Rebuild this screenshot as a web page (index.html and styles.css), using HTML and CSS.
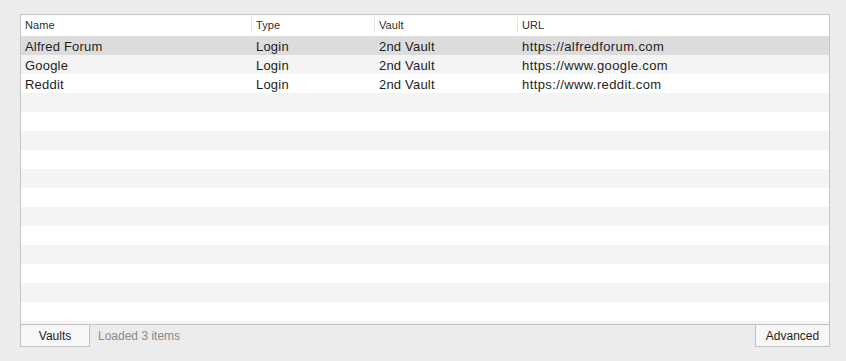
FILE: index.html
```html
<!DOCTYPE html>
<html lang="en">
	<head>
		<meta charset="UTF-8" />
		<title>Vault items</title>
		<link rel="stylesheet" href="styles.css">
	</head>
	<body>
		<div class="window">
			<div class="table">
				<div class="head row">
					<div class="cell">Name</div>
					<div class="cell">Type</div>
					<div class="cell">Vault</div>
					<div class="cell">URL</div>
				</div>
				<div class="rows">
					<div class="row selected">
						<div class="cell">Alfred Forum</div>
						<div class="cell">Login</div>
						<div class="cell">2nd Vault</div>
						<div class="cell url">https://alfredforum.com</div>
					</div>
					<div class="row">
						<div class="cell">Google</div>
						<div class="cell">Login</div>
						<div class="cell">2nd Vault</div>
						<div class="cell url">https://www.google.com</div>
					</div>
					<div class="row">
						<div class="cell">Reddit</div>
						<div class="cell">Login</div>
						<div class="cell">2nd Vault</div>
						<div class="cell url">https://www.reddit.com</div>
					</div>
					<div class="row"></div>
					<div class="row"></div>
					<div class="row"></div>
					<div class="row"></div>
					<div class="row"></div>
					<div class="row"></div>
					<div class="row"></div>
					<div class="row"></div>
					<div class="row"></div>
					<div class="row"></div>
					<div class="row"></div>
					<div class="row"></div>
					<div class="row"></div>
				</div>
			</div>
			<div class="footer">
				<button class="btn btn-vaults">Vaults</button>
				<span class="status">Loaded 3 items</span>
				<button class="btn btn-advanced">Advanced</button>
			</div>
		</div>
	</body>
</html>
```

FILE: styles.css
```css
*,
*::before,
*::after {
	box-sizing: border-box;
}
body {
	margin: 0;
	background-color: #ececec;
	color: #1e1e1e;
	font-family: 'Liberation Sans', Arial, sans-serif;
	width: 846px;
	height: 361px;
	overflow: hidden;
}
.window {
	padding: 14px 16px 0 20px;
}
.table {
	background-color: #ffffff;
	border: 1px solid #c6c6c6;
}
.row {
	display: grid;
	grid-template-columns: 230px 123px 143px 1fr;
	height: 19px;
	font-size: 13px;
	letter-spacing: 0.2px;
}
.row .cell {
	display: flex;
	align-items: center;
	padding: 2px 0 0 4px;
	white-space: nowrap;
	overflow: hidden;
}
.row .cell + .cell {
	padding-left: 5px;
}
.row .url {
	letter-spacing: 0.4px;
}
.head {
	height: 21px;
	font-size: 11px;
	letter-spacing: 0.1px;
	color: #2e2e2e;
}
.head .cell {
	padding: 0 0 0 4px;
	margin: 2px 0 3px;
}
.head .cell + .cell {
	border-left: 1px solid #e2e2e2;
	padding-left: 4px;
}
.rows {
	height: 288px;
	overflow: hidden;
}
.rows .row:nth-child(even) {
	background-color: #f4f4f4;
}
.rows .row.selected {
	background-color: #dcdcdc;
}
.footer {
	display: flex;
	align-items: center;
	margin-top: -1px;
	height: 23px;
}
.btn {
	height: 23px;
	margin: 0;
	padding: 0;
	border: 1px solid #c4c4c4;
	background-color: #f7f7f7;
	color: #1e1e1e;
	font-family: inherit;
	font-size: 12px;
}
.btn-vaults {
	width: 70px;
}
.btn-advanced {
	width: 75px;
	margin-left: auto;
}
.status {
	margin-left: 8px;
	font-size: 12px;
	color: #8a8a8a;
}
```
